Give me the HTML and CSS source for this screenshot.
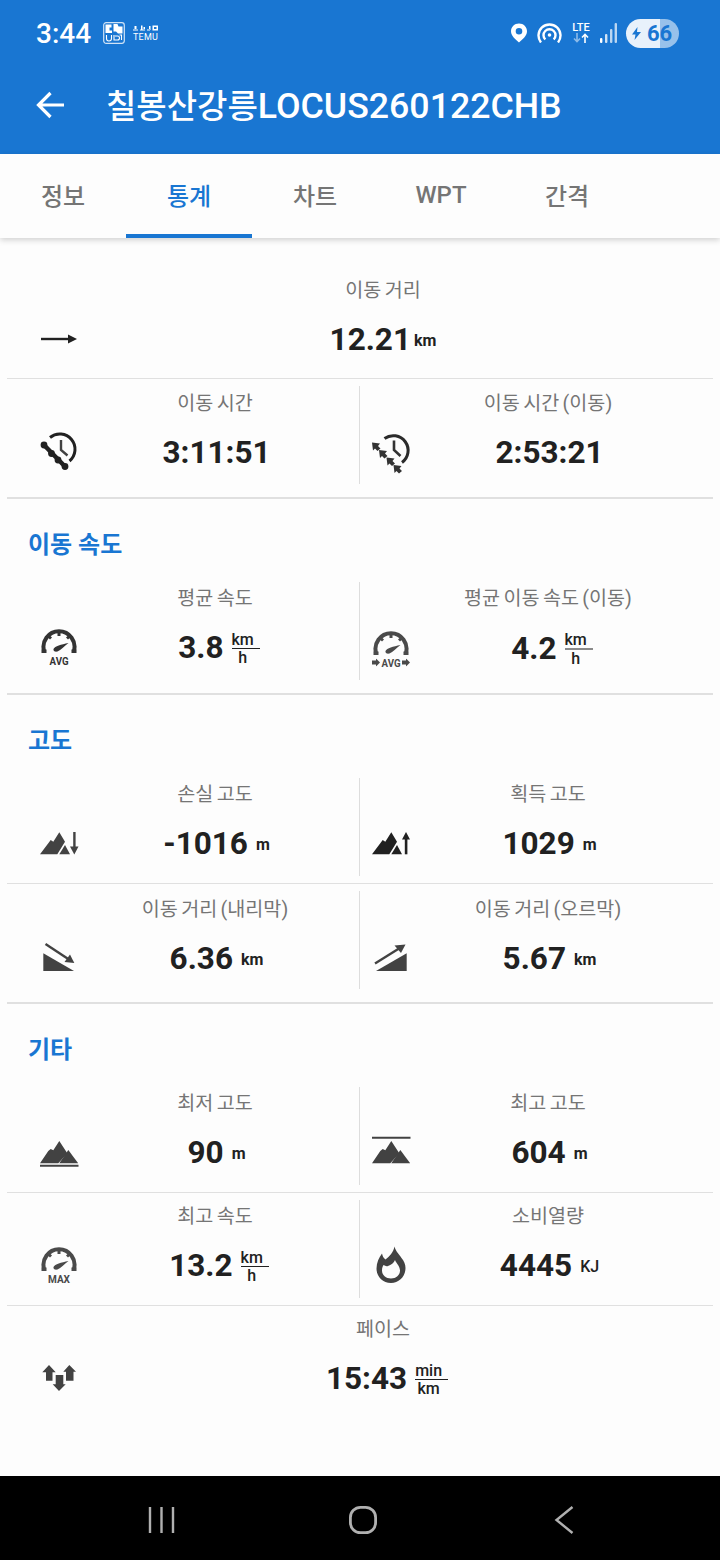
FILE: index.html
```html
<!DOCTYPE html>
<html lang="ko">
<head>
  <meta charset="UTF-8" />
  <meta name="viewport" content="width=device-width, initial-scale=1" />
  <title>칠봉산강릉LOCUS260122CHB - 통계</title>
  <link rel="stylesheet" href="styles.css">
</head>
<body>
  <svg class="icon-defs" aria-hidden="true">
    <symbol id="gauge" viewBox="0 0 38 38">
      <path d="M4.300 23.700A15.500 15.500 0 1 1 33.700 23.700" fill="none" stroke="currentColor" stroke-width="4" />
      <path d="M1.500 21.500h5v3.500h-5zM31.500 21.500h5v3.500h-5zM17.500 3h3v5h-3zM6.500 8l2-2 3.500 3.500-2 2zM31.500 8l-2-2-3.500 3.500 2 2z" fill="currentColor" />
      <path d="M13.500 21C15 18 21 16.500 28.500 15C24 18.500 21 22 17.500 23.500C15 24 13 23 13.500 21Z" fill="currentColor" />
    </symbol>
    <symbol id="peaks" viewBox="0 0 38 38">
      <path d="M0 30.300L8.300 18L10.700 16L13.300 17.300L19.300 8L27.300 20.300L18.300 30.300Z" fill="currentColor" />
      <path d="M19.300 30.300L28.300 17L38.300 30.300Z" fill="currentColor" />
    </symbol>
    <symbol id="peaks-narrow" viewBox="0 0 38 38">
      <path d="M0 30.300L8.300 19.300L10.700 16L13.300 17.700L19.300 8.300L25 17.700L17.300 30.300Z" fill="currentColor" />
      <path d="M19.300 30.300L25 21L30 30.300Z" fill="currentColor" />
    </symbol>
    <symbol id="side-arrow" viewBox="0 0 8 8">
      <path d="M0 2h4V0l4 4-4 4V6H0z" fill="currentColor" />
    </symbol>
  </svg>

  <header class="app-header">
    <div class="status-bar">
      <div class="status-left">
        <span class="status-time">3:44</span>
        <svg class="puzzle-icon" viewBox="0 0 22 22" fill="none">
          <rect x="0.700" y="0.700" width="20.600" height="20.600" rx="2.500" stroke="#fff" stroke-opacity=".8" stroke-width="1.200" />
          <path d="M2.500 2.500h6v3h-2v3h2.500v2.500h-6.500zM10.500 2h4l1 2.500h4v7h-4.500l-2-2h-2.500z" fill="#fff" />
          <path d="M3.500 13v3.500a2.500 2.500 0 0 0 5 0V13M11 13v5h3.500a2 2 0 0 0 0-4H12M16.500 13h2v5" stroke="#fff" stroke-width="1.100" />
        </svg>
        <div class="temu-badge">
          <svg class="temu-marks" viewBox="0 0 25 6">
            <path d="M0 4.500h5v1H0zM1.500 1h2v3h-2zM7 4.500h5v1H7zM8 .5h1.500v4H8zM10.500 2h1.500v2h-1.500zM14 4.500h3v1h-3zM16 1h1.500v4H16zM19.500 .5h5.500v5h-5.500zM21 2v2h2.500V2z" fill="#fff" fill-rule="evenodd" />
          </svg>
          <span class="temu-name">TEMU</span>
        </div>
      </div>
      <div class="status-right">
        <svg class="pin-icon" viewBox="0 0 18 20">
          <path d="M9 0.500C4.400 0.500 1 4 1 8.300C1 13 5.500 16.500 9 19.500C12.500 16.500 17 13 17 8.300C17 4 13.600 0.500 9 0.500ZM9 11.500A3.300 3.300 0 1 1 9 4.900A3.300 3.300 0 0 1 9 11.500Z" fill="#fff" fill-rule="evenodd" />
        </svg>
        <svg class="hotspot-icon" viewBox="0 0 25 20" fill="none" stroke="#fff" stroke-width="2.400">
          <path d="M4 19.500A11 11 0 1 1 21 19.500" />
          <path d="M8.300 16.500A6 6 0 1 1 16.700 16.500" />
          <circle cx="12.500" cy="12" r="1.800" fill="#fff" stroke="none" />
        </svg>
        <div class="lte-block">
          <span class="lte-label">LTE</span>
          <svg class="lte-arrows" viewBox="0 0 20 10" fill="none" stroke-width="1.600">
            <path d="M6 0v8.500M3 5.500l3 3.200 3-3.200" stroke="#fff" stroke-opacity=".5" />
            <path d="M14 10V1.500M11 4.500l3-3.200 3 3.200" stroke="#fff" />
          </svg>
        </div>
        <svg class="signal-icon" viewBox="0 0 17 20">
          <rect x="0" y="15" width="2.400" height="5" rx="1" fill="#fff" />
          <rect x="5" y="11" width="2.400" height="9" rx="1" fill="#fff" fill-opacity=".8" />
          <rect x="10" y="6" width="2.400" height="14" rx="1" fill="#fff" fill-opacity=".7" />
          <rect x="14.600" y="0" width="2.400" height="20" rx="1" fill="#fff" fill-opacity=".7" />
        </svg>
        <div class="battery">
          <svg class="bolt-icon" viewBox="0 0 9 13">
            <path d="M5.500 0L0 7.500h3.500L2.500 13 9 5H5z" fill="#1976d2" />
          </svg>
          <span class="battery-level">66</span>
        </div>
      </div>
    </div>
    <div class="toolbar">
      <svg class="back-icon" viewBox="0 0 28 28" fill="none" stroke="#fff" stroke-width="3.200">
        <path d="M28 14H3M14.500 2L2.500 14L14.500 26" />
      </svg>
      <h1 class="toolbar-title">칠봉산강릉<span class="title-latin">LOCUS260122CHB</span></h1>
    </div>
  </header>

  <nav class="tabs">
    <div class="tab">정보</div>
    <div class="tab active">통계</div>
    <div class="tab">차트</div>
    <div class="tab">WPT</div>
    <div class="tab">간격</div>
  </nav>

  <main class="content">
    <section class="stat-group first-group">
      <div class="stat-row stat-row-shift-1">
        <div class="stat stat-full">
          <div class="stat-label">이동 거리</div>
          <svg class="stat-icon" viewBox="0 0 38 38">
            <path d="M1 17.800h28v2.400H1z" fill="#212121" />
            <path d="M28 14.500L37 19L28 23.500Z" fill="#212121" />
          </svg>
          <div class="stat-value stat-value-tight"><span class="number">12.21</span><span class="unit">km</span></div>
        </div>
      </div>
      <hr class="divider" />
      <div class="stat-row stat-row-shift-1">
        <div class="stat stat-left">
          <div class="stat-label">이동 시간</div>
          <svg class="stat-icon" viewBox="0 0 38 38" fill="none">
            <path d="M10 4.500A15 15 0 1 1 29.500 28" stroke="#212121" stroke-width="3" />
            <path d="M21 7V17L27.500 22.500" stroke="#424242" stroke-width="2.400" />
            <path d="M4 12L25 33.500" stroke="#212121" stroke-width="4.500" />
            <g fill="#212121">
              <circle cx="4" cy="12" r="3.400" />
              <circle cx="11.500" cy="20.500" r="3.400" />
              <circle cx="18" cy="27" r="3.400" />
              <circle cx="25" cy="33.500" r="3.400" />
            </g>
          </svg>
          <div class="stat-value"><span class="number">3:11:51</span></div>
        </div>
        <div class="stat stat-right">
          <div class="stat-label">이동 시간 (이동)</div>
          <svg class="stat-icon" viewBox="0 0 38 38" fill="none">
            <path d="M12.500 5.500A14.500 14.500 0 1 1 30 29.500" stroke="#2b2b2b" stroke-width="3" />
            <path d="M22 7.500V17L28.500 23" stroke="#333" stroke-width="2.600" />
            <g fill="#333">
              <path d="M0 9.500L8 10.500L6 13L8.500 15.500L5.500 18L3 15.500L1 17.500Z" />
              <path d="M7 17L15 18L13 20.500L15.500 23L12.500 25.500L10 23L8 25Z" />
              <path d="M14.500 24.500L22.500 25.500L20.500 28L23 30.500L20 33L17.500 30.500L15.500 32.500Z" />
              <path d="M21.500 32L29.500 33L27.500 35.500L30 38L27 40.500L24.500 38L22.500 40Z" />
            </g>
          </svg>
          <div class="stat-value"><span class="number">2:53:21</span></div>
        </div>
      </div>
    </section>

    <section class="stat-group">
      <h2 class="group-title">이동 속도</h2>
      <div class="stat-row">
        <div class="stat stat-left">
          <div class="stat-label">평균 속도</div>
          <svg class="stat-icon gauge-dark" viewBox="0 0 38 38">
            <use href="#gauge" width="38" height="38" />
            <text class="gauge-text" x="19" y="37" text-anchor="middle" textLength="19" lengthAdjust="spacingAndGlyphs">AVG</text>
          </svg>
          <div class="stat-value"><span class="number">3.8</span><span class="fraction"><span class="frac-top">km</span><span class="frac-bottom">h</span></span></div>
        </div>
        <div class="stat stat-right">
          <div class="stat-label">평균 이동 속도 (이동)</div>
          <svg class="stat-icon stat-icon-low gauge-grey" viewBox="0 0 38 38">
            <use href="#gauge" width="38" height="38" />
            <text class="gauge-text" x="19" y="36.500" text-anchor="middle" textLength="19" lengthAdjust="spacingAndGlyphs">AVG</text>
            <use href="#side-arrow" x="0" y="28.500" width="8" height="8" />
            <use href="#side-arrow" x="30" y="28.500" width="8" height="8" />
          </svg>
          <div class="stat-value stat-value-low"><span class="number">4.2</span><span class="fraction"><span class="frac-top frac-grey">km</span><span class="frac-bottom">h</span></span></div>
        </div>
      </div>
    </section>

    <section class="stat-group">
      <h2 class="group-title">고도</h2>
      <div class="stat-row">
        <div class="stat stat-left">
          <div class="stat-label">손실 고도</div>
          <svg class="stat-icon icon-grey" viewBox="0 0 38 38">
            <use href="#peaks-narrow" width="38" height="38" />
            <path d="M33.200 8h2.400v16h-2.400z" fill="currentColor" />
            <path d="M30 22.500h8.500L34.300 30.500Z" fill="currentColor" />
          </svg>
          <div class="stat-value"><span class="number">-1016</span><span class="unit">m</span></div>
        </div>
        <div class="stat stat-right">
          <div class="stat-label">획득 고도</div>
          <svg class="stat-icon icon-dark" viewBox="0 0 38 38">
            <use href="#peaks-narrow" width="38" height="38" />
            <path d="M32.800 14h2.600v16.300h-2.600z" fill="currentColor" />
            <path d="M30 15.500h8L34 8Z" fill="currentColor" />
          </svg>
          <div class="stat-value"><span class="number">1029</span><span class="unit">m</span></div>
        </div>
      </div>
      <hr class="divider" />
      <div class="stat-row stat-row-shift-2">
        <div class="stat stat-left">
          <div class="stat-label">이동 거리 (내리막)</div>
          <svg class="stat-icon icon-grey" viewBox="0 0 38 38">
            <path d="M3.300 14.300V32H34Z" fill="currentColor" />
            <path d="M5.500 5L29 20.500" stroke="currentColor" stroke-width="2.400" />
            <path d="M24.500 23L34.300 24L30 15.500Z" fill="currentColor" />
          </svg>
          <div class="stat-value"><span class="number">6.36</span><span class="unit">km</span></div>
        </div>
        <div class="stat stat-right">
          <div class="stat-label">이동 거리 (오르막)</div>
          <svg class="stat-icon icon-grey" viewBox="0 0 38 38">
            <path d="M34.700 14.300V32H4Z" fill="currentColor" />
            <path d="M3 24.500L27 9.500" stroke="currentColor" stroke-width="2.400" />
            <path d="M22.500 6.500L33.500 5.500L29 14Z" fill="currentColor" />
          </svg>
          <div class="stat-value"><span class="number">5.67</span><span class="unit">km</span></div>
        </div>
      </div>
    </section>

    <section class="stat-group last-group">
      <h2 class="group-title">기타</h2>
      <div class="stat-row">
        <div class="stat stat-left">
          <div class="stat-label">최저 고도</div>
          <svg class="stat-icon icon-grey" viewBox="0 0 38 38">
            <use href="#peaks" width="38" height="38" />
            <path d="M0 31.800h38.500v2H0z" fill="currentColor" />
          </svg>
          <div class="stat-value"><span class="number">90</span><span class="unit">m</span></div>
        </div>
        <div class="stat stat-right">
          <div class="stat-label">최고 고도</div>
          <svg class="stat-icon icon-grey" viewBox="0 0 38 38">
            <use href="#peaks" width="38" height="38" />
            <path d="M0 3.700h38.500v2H0z" fill="currentColor" />
          </svg>
          <div class="stat-value"><span class="number">604</span><span class="unit">m</span></div>
        </div>
      </div>
      <hr class="divider" />
      <div class="stat-row">
        <div class="stat stat-left">
          <div class="stat-label">최고 속도</div>
          <svg class="stat-icon gauge-grey" viewBox="0 0 38 38">
            <use href="#gauge" width="38" height="38" />
            <text class="gauge-text" x="19" y="36.500" text-anchor="middle" textLength="22" lengthAdjust="spacingAndGlyphs">MAX</text>
          </svg>
          <div class="stat-value"><span class="number">13.2</span><span class="fraction"><span class="frac-top">km</span><span class="frac-bottom">h</span></span></div>
        </div>
        <div class="stat stat-right">
          <div class="stat-label">소비열량</div>
          <svg class="stat-icon icon-grey" viewBox="0 0 38 38">
            <path fill-rule="evenodd" fill="currentColor" d="M22.500 0.500C24 6 27 8 29.500 12C32 15 33.500 18 33.500 22C33.500 30.500 27 37 19 37C10.500 37 4.500 30.500 4.500 22.500C4.500 16.500 7 11.500 10 7.500C10.500 10 11.500 12 13.500 13.500C17.500 10.500 21.500 6 22.500 0.500ZM23 14C24 17 28 20 28 24.500C28 29 24 32.500 19 32.500C14 32.500 10 29 10 24.500C10 22 10.500 20.500 11.500 19C13 20 14.500 20.500 16 20C19 19 22 17 23 14Z" />
          </svg>
          <div class="stat-value"><span class="number">4445</span><span class="unit unit-caps">KJ</span></div>
        </div>
      </div>
      <hr class="divider" />
      <div class="stat-row">
        <div class="stat stat-full">
          <div class="stat-label">페이스</div>
          <svg class="stat-icon icon-grey" viewBox="0 0 38 38">
            <path d="M9 6L15.700 13.300H12.500V21.700H6V13.300H2.300Z" fill="currentColor" />
            <path d="M29.300 6L36 12.700H33.500V21.700H26V12.700H23.300Z" fill="currentColor" />
            <path d="M15.700 16H23.300V25.300H25.700L19 32L12.700 25.300H15.700Z" fill="currentColor" />
          </svg>
          <div class="stat-value"><span class="number">15:43</span><span class="fraction"><span class="frac-top">min</span><span class="frac-bottom">km</span></span></div>
        </div>
      </div>
    </section>
  </main>

  <footer class="nav-bar">
    <div class="nav-item">
      <svg class="nav-icon" viewBox="0 0 28 28" fill="none" stroke="#b0b0b0" stroke-width="2.400">
        <path d="M2 1v26M13.500 1v26M25 1v26" />
      </svg>
    </div>
    <div class="nav-item">
      <svg class="nav-icon" viewBox="0 0 28 28" fill="none" stroke="#b0b0b0" stroke-width="2.800">
        <rect x="1.400" y="1.400" width="25.200" height="25.200" rx="10" />
      </svg>
    </div>
    <div class="nav-item">
      <svg class="nav-icon" viewBox="0 0 28 28" fill="none" stroke="#b0b0b0" stroke-width="2.400">
        <path d="M22.500 1L6.500 14L22.500 27" />
      </svg>
    </div>
  </footer>
</body>
</html>
```

FILE: styles.css
```css
* {
  box-sizing: border-box;
}

body {
  margin: 0;
  width: 720px;
  height: 1560px;
  display: flex;
  flex-direction: column;
  overflow: hidden;
  font-family: Roboto, "Noto Sans CJK KR", sans-serif;
  background-color: #fdfdfd;
  color: #212121;
}

.icon-defs {
  display: none;
}

/* Cabecera */
.app-header {
  background-color: #1976d2;
  color: white;
  height: 154px;
}

.status-bar {
  height: 66px;
  padding: 0 41px 0 36px;
  display: flex;
  align-items: center;
  justify-content: space-between;
}

.status-left {
  display: flex;
  align-items: center;
}

.status-time {
  font-size: 28px;
  font-weight: 500;
  width: 67px;
}

.puzzle-icon {
  width: 22px;
  height: 22px;
  margin-right: 8px;
}

.temu-badge {
  display: flex;
  flex-direction: column;
  width: 25px;
}

.temu-marks {
  width: 25px;
  height: 6px;
  margin-bottom: 2px;
}

.temu-name {
  font-size: 9px;
  line-height: 8px;
  letter-spacing: 0.2px;
}

.status-right {
  display: flex;
  align-items: center;
  gap: 9px;
}

.pin-icon {
  width: 18px;
  height: 20px;
}

.hotspot-icon {
  width: 25px;
  height: 20px;
}

.lte-block {
  width: 20px;
  display: flex;
  flex-direction: column;
  align-items: center;
  margin-top: -1px;
}

.lte-label {
  font-size: 11px;
  font-weight: 500;
  line-height: 11px;
}

.lte-arrows {
  width: 20px;
  height: 10px;
}

.signal-icon {
  width: 17px;
  height: 20px;
}

.battery {
  width: 53px;
  height: 29px;
  border-radius: 15px;
  background: linear-gradient(90deg, #e8f1fb 64%, rgba(255, 255, 255, 0.55) 64%);
  display: flex;
  align-items: center;
  padding-left: 6px;
  gap: 6px;
}

.bolt-icon {
  width: 9px;
  height: 13px;
}

.battery-level {
  font-size: 22px;
  font-weight: 700;
  color: #1976d2;
}

.toolbar {
  height: 80px;
  padding-left: 36px;
  display: flex;
  align-items: center;
  gap: 42px;
}

.back-icon {
  width: 28px;
  height: 28px;
  margin-bottom: 2px;
}

.toolbar-title {
  margin: 0 0 4px;
  font-size: 33px;
  font-weight: 500;
  white-space: nowrap;
}

.title-latin {
  font-size: 35.700px;
}

/* Pestañas */
.tabs {
  height: 84px;
  display: flex;
  background-color: #fdfdfd;
  box-shadow: 0 2px 6px rgba(0, 0, 0, 0.18);
  position: relative;
}

.tab {
  width: 126px;
  display: flex;
  align-items: center;
  justify-content: center;
  padding-top: 1px;
  font-size: 24px;
  font-weight: 500;
  color: #757575;
  border-bottom: 4px solid transparent;
}

.tab.active {
  color: #1976d2;
  border-bottom-color: #1976d2;
}

/* Contenido */
.content {
  flex: 1;
  padding: 28px 7px 0;
}

.stat-group {
  padding-bottom: 6px;
  border-bottom: 2px solid #e0e0e0;
}

.last-group {
  border-bottom: none;
}

.group-title {
  margin: 0;
  padding: 30px 21px 14px;
  font-size: 24px;
  line-height: 32px;
  font-weight: 700;
  color: #1976d2;
}

.stat-row {
  display: flex;
  height: 98px;
  margin: 7px 0;
}

.stat-row-shift-1 .stat {
  padding-top: 1px;
}

.stat-row-shift-2 .stat {
  padding-top: 2px;
}

.divider {
  margin: 0;
  border: none;
  border-top: 1px solid #e0e0e0;
}

.stat {
  display: grid;
  grid-template-columns: 38px 1fr;
  grid-template-rows: 32px 66px;
  column-gap: 13px;
  align-items: center;
}

.stat-full {
  width: 100%;
  padding-left: 33px;
  padding-right: 38px;
}

.stat-left {
  width: 352px;
  padding-left: 33px;
  padding-right: 20px;
}

.stat-right {
  flex: 1;
  padding-left: 12px;
  padding-right: 40px;
  border-left: 1px solid #dddddd;
}

.stat-label {
  grid-column: 2;
  padding-top: 1px;
  font-size: 19.600px;
  line-height: 32px;
  word-spacing: -1.500px;
  color: #757575;
  text-align: center;
  white-space: nowrap;
}

.stat-icon {
  width: 38px;
  height: 38px;
  grid-column: 1;
  color: #424242;
  overflow: visible;
}

.icon-grey {
  color: #424242;
}

.icon-dark {
  color: #212121;
}

.gauge-dark {
  color: #333333;
}

.gauge-grey {
  color: #4a4a4a;
}

.gauge-text {
  font-family: Roboto, sans-serif;
  font-size: 11px;
  font-weight: 700;
  fill: currentColor;
}

.stat-value {
  grid-column: 2;
  display: flex;
  align-items: center;
  justify-content: center;
  gap: 8px;
  padding-top: 2px;
  padding-left: 3px;
}

.stat-value-tight {
  gap: 3px;
  padding-left: 0;
}

.stat-value-low {
  margin-top: 2px;
}

.stat-icon-low {
  margin-top: 4px;
}

.number {
  font-size: 31.500px;
  line-height: 40px;
  font-weight: 700;
  color: #212121;
}

.unit {
  font-size: 16px;
  font-weight: 700;
  color: #212121;
}

.unit-caps {
  font-weight: 500;
}

.fraction {
  display: flex;
  flex-direction: column;
  font-size: 16px;
  font-weight: 500;
  line-height: 17px;
  text-align: center;
  margin-right: -5px;
}

.frac-top {
  padding-right: 6px;
  border-bottom: 1px solid #212121;
}

.frac-grey {
  border-bottom: 2px solid #8a8a8a;
}

.frac-bottom {
  padding-right: 6px;
}

/* Barra de navegación */
.nav-bar {
  height: 84px;
  background-color: black;
  display: flex;
  justify-content: center;
  align-items: center;
  padding-left: 5px;
  padding-top: 4px;
}

.nav-item {
  width: 201px;
  display: flex;
  justify-content: center;
}

.nav-icon {
  width: 28px;
  height: 28px;
}
```
